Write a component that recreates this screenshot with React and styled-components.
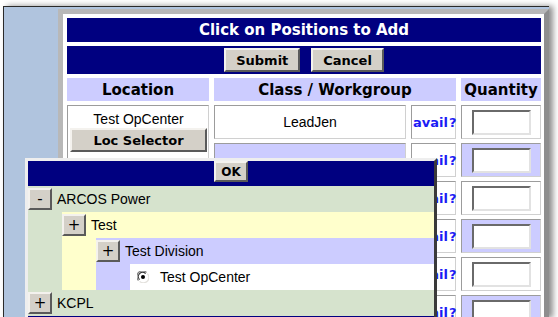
import React from "react";
import styled, { createGlobalStyle } from "styled-components";

const Global = createGlobalStyle`
  html, body { margin: 0; padding: 0; background: #ffffff; }
  body { font-family: "Liberation Sans", Arial, sans-serif; }
  * { box-sizing: border-box; }
`;

const NAVY = "#000080";
const LAV = "#ccccff";
const GREEN = "#d6e3cd";
const YELLOW = "#ffffcc";
const BTN = "#d4d0c8";
const UI = `"DejaVu Sans", Verdana, sans-serif`;

const Frame = styled.div`
  position: relative;
  margin: 6px 0 0 3px;
  width: 546px;
  height: 312px;
  overflow: hidden;
  background: #b0c4de;
  border-top: 1px solid #2a2a2a;
  border-left: 1px solid #2a2a2a;
  box-shadow: 4px 0 6px rgba(0, 0, 0, 0.45);
`;

const Panel = styled.div`
  margin: 2px 0 0 54px;
  width: 491px;
  background: #ffffff;
  border: 5px solid;
  border-color: #b8b8b8 #8e8e8e #8e8e8e #b8b8b8;
  padding: 4px 3px 4px 4px;
`;

const Grid = styled.div`
  display: grid;
  grid-template-columns: 142px 192px 45px 80px;
  grid-template-rows: 24px 28px 23px repeat(6, 34px);
  column-gap: 5px;
  row-gap: 4px;
`;

const Title = styled.div`
  grid-column: 1 / -1;
  background: ${NAVY};
  color: #ffffff;
  font-family: ${UI};
  font-weight: bold;
  font-size: 15px;
  display: flex;
  align-items: center;
  justify-content: center;
`;

const ButtonBar = styled.div`
  grid-column: 1 / -1;
  background: ${NAVY};
  display: flex;
  align-items: center;
  justify-content: center;
  gap: 11px;
`;

const Btn = styled.button`
  height: ${(p) => p.$h || 24}px;
  padding: 0 ${(p) => p.$px ?? 10}px;
  background: ${BTN};
  border: 2px solid;
  border-color: #f4f2ee #5a5a5a #5a5a5a #f4f2ee;
  font-family: ${UI};
  font-weight: bold;
  font-size: ${(p) => p.$fs || 13}px;
  color: #000000;
  display: flex;
  align-items: center;
  justify-content: center;
`;

const HeadCell = styled.div`
  grid-column: span ${(p) => p.$span || 1};
  background: ${LAV};
  font-family: ${UI};
  font-weight: bold;
  font-size: 15px;
  color: #000;
  display: flex;
  align-items: center;
  justify-content: center;
`;

const Cell = styled.div`
  border: 1px solid;
  border-color: #9c9c9c #d0d0d0 #d0d0d0 #9c9c9c;
  background: ${(p) => (p.$alt ? LAV : "#ffffff")};
  display: flex;
  align-items: center;
`;

const LocCell = styled(Cell)`
  grid-column: 1;
  grid-row: 4 / 10;
  flex-direction: column;
  align-items: stretch;
  justify-content: flex-start;
  padding: 4px 1px 0 2px;
`;

const LocName = styled.div`
  height: 18px;
  line-height: 18px;
  text-align: center;
  font-size: 14px;
  color: #000;
`;

const ClassCell = styled(Cell)`
  justify-content: center;
  font-size: 14px;
  color: #000;
`;

const AvailCell = styled(Cell)`
  padding-left: 1px;
  font-family: ${UI};
  font-weight: bold;
  font-size: 13px;
  color: #1c1cf5;
  white-space: nowrap;
`;

const Q = styled.span`
  margin-left: 1px;
`;

const QtyCell = styled(Cell)`
  justify-content: center;
`;

const QtyInput = styled.div`
  width: 59px;
  height: 25px;
  background: #ffffff;
  border: 2px solid;
  border-color: #6a6a6a #e2e2e2 #e2e2e2 #6a6a6a;
`;

const Popup = styled.div`
  position: absolute;
  left: 21px;
  top: 151px;
  width: 412px;
  height: 200px;
  border: 3px solid;
  border-color: #eeeeee #3a3a3a #3a3a3a #eeeeee;
  background: ${NAVY};
`;

const PopBar = styled.div`
  height: 25px;
  background: ${NAVY};
  display: flex;
  justify-content: center;
  align-items: flex-start;
`;

const Node = styled.div`
  background: ${(p) => p.$bg};
`;

const Row = styled.div`
  height: 26px;
  display: flex;
  align-items: center;
  gap: 5px;
  font-size: 14px;
  color: #000;
`;

const Children = styled.div`
  padding-left: 34px;
`;

const Toggle = styled.div`
  width: 24px;
  height: 22px;
  background: ${BTN};
  border: 2px solid;
  border-color: #f4f2ee #5a5a5a #5a5a5a #f4f2ee;
  font-family: ${UI};
  font-size: 15px;
  line-height: 16px;
  color: #000;
  display: flex;
  align-items: center;
  justify-content: center;
`;

const LeafRow = styled(Row)`
  gap: 11px;
  padding-left: 7px;
`;

const Radio = () => (
  <svg width="12" height="12" viewBox="0 0 12 12">
    <circle cx="6" cy="6" r="5.5" fill="#ffffff" />
    <path d="M1.5 9.5 A5 5 0 0 1 9.5 1.5" fill="none" stroke="#808080" strokeWidth="1.2" />
    <path d="M2.6 8.6 A3.8 3.8 0 0 1 8.6 2.6" fill="none" stroke="#303030" strokeWidth="1.1" />
    <path d="M10.3 2.6 A5 5 0 0 1 2.6 10.3" fill="none" stroke="#e4e2de" strokeWidth="1.2" />
    <circle cx="6" cy="6" r="2" fill="#000000" />
  </svg>
);

const Footer = styled.div`
  height: 30px;
  background: ${NAVY};
`;

const classes = ["LeadJen", "", "", "", "", ""];

export default function App() {
  return (
    <>
      <Global />
      <Frame>
        <Panel>
          <Grid>
            <Title>Click on Positions to Add</Title>
            <ButtonBar>
              <Btn>Submit</Btn>
              <Btn>Cancel</Btn>
            </ButtonBar>
            <HeadCell>Location</HeadCell>
            <HeadCell $span={2}>Class / Workgroup</HeadCell>
            <HeadCell>Quantity</HeadCell>
            <LocCell>
              <LocName>Test OpCenter</LocName>
              <Btn>Loc Selector</Btn>
            </LocCell>
            {classes.map((c, i) => (
              <React.Fragment key={i}>
                <ClassCell $alt={i % 2 === 1}>{c}</ClassCell>
                <AvailCell>
                  avail<Q>?</Q>
                </AvailCell>
                <QtyCell $alt={i % 2 === 1}>
                  <QtyInput />
                </QtyCell>
              </React.Fragment>
            ))}
          </Grid>
        </Panel>
        <Popup>
          <PopBar>
            <Btn $h={21} $fs={12} $px={5}>OK</Btn>
          </PopBar>
          <Node $bg={GREEN}>
            <Row>
              <Toggle>-</Toggle>
              ARCOS Power
            </Row>
            <Children>
              <Node $bg={YELLOW}>
                <Row>
                  <Toggle>+</Toggle>
                  Test
                </Row>
                <Children>
                  <Node $bg={LAV}>
                    <Row>
                      <Toggle>+</Toggle>
                      Test Division
                    </Row>
                    <Children>
                      <Node $bg="#ffffff">
                        <LeafRow>
                          <Radio />
                          Test OpCenter
                        </LeafRow>
                      </Node>
                    </Children>
                  </Node>
                </Children>
              </Node>
            </Children>
          </Node>
          <Node $bg={GREEN}>
            <Row>
              <Toggle>+</Toggle>
              KCPL
            </Row>
          </Node>
          <Footer />
        </Popup>
      </Frame>
    </>
  );
}
